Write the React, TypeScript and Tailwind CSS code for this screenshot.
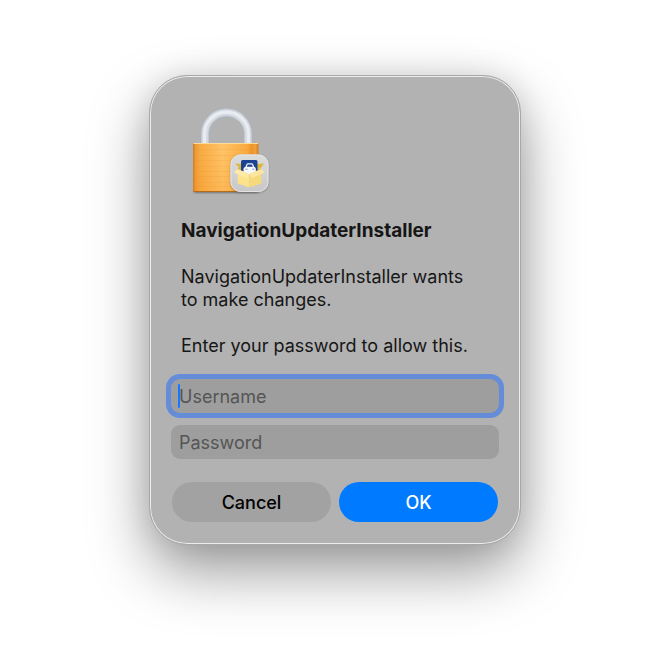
import { useState } from 'react';
import type { FormEvent } from 'react';

const APP_NAME = 'NavigationUpdaterInstaller';

type FieldName = 'username' | 'password';

interface CredentialFieldProps {
  name: FieldName;
  label: string;
  value: string;
  focused: boolean;
  onFocus: (name: FieldName) => void;
  onChange: (value: string) => void;
}

/** Padlock with the installer badge in its lower right corner. */
function LockIcon({ className }: { className?: string }) {
  return (
    <svg width="80" height="90" viewBox="0 0 80 90" role="img" aria-label="Locked" className={className}>
      <defs>
        <linearGradient id="lock-body" x1="0" x2="1" y1="0" y2="0">
          <stop offset="0" stopColor="#c97a22" />
          <stop offset="0.04" stopColor="#ee9c38" />
          <stop offset="0.12" stopColor="#f8ac45" />
          <stop offset="0.45" stopColor="#ffc468" />
          <stop offset="0.82" stopColor="#f9ab42" />
          <stop offset="0.9" stopColor="#ec942c" />
          <stop offset="0.95" stopColor="#f2a13c" />
          <stop offset="1" stopColor="#cf7c22" />
        </linearGradient>
        <linearGradient id="lock-shade" x1="0" x2="0" y1="0" y2="1">
          <stop offset="0" stopColor="#ff9d2b" stopOpacity="0" />
          <stop offset="1" stopColor="#f08a1c" stopOpacity="0.2" />
        </linearGradient>
        <linearGradient id="badge-face" x1="0" x2="0" y1="0" y2="1">
          <stop offset="0" stopColor="#dcdcdc" />
          <stop offset="1" stopColor="#c8c8c8" />
        </linearGradient>
        <filter id="soft" x="-20%" y="-20%" width="140%" height="140%">
          <feGaussianBlur stdDeviation="1" />
        </filter>
      </defs>

      {/* shackle */}
      <g fill="none">
        <path d="M15 39V29a21.500 21.500 0 0 1 43 0v10" stroke="#a9b0ba" strokeWidth="9" />
        <path d="M15 39V29a21.500 21.500 0 0 1 43 0v10" stroke="#c6cdd5" strokeWidth="7.8" />
        <path d="M15 39V29a21.500 21.500 0 0 1 43 0v10" stroke="#d8dde4" strokeWidth="5.6" />
        <path d="M14.500 39V29a22 22 0 0 1 44 0v10" stroke="#e9edf1" strokeWidth="2.800" />
      </g>

      {/* body */}
      <rect x="4" y="84" width="64" height="4" rx="1" fill="#4a4a4a" opacity="0.6" filter="url(#soft)" />
      <rect x="3" y="38" width="65.5" height="49" rx="1.2" fill="url(#lock-body)" />
      <rect x="3" y="38" width="65.5" height="49" rx="1.2" fill="url(#lock-shade)" />
      <path
        d="M4 44.5h64M4 50.5h64M4 55.5h64M4 61.5h64M4 66.5h64M4 71.5h64M4 77.5h64M4 81.5h64"
        stroke="#e98f2a"
        strokeOpacity="0.16"
      />
      <path d="M3.5 38.5h64.5" stroke="#ffdc96" />
      <path d="M3.5 86.5h64.5" stroke="#b56a1c" />

      {/* badge */}
      <rect x="40.500" y="50.5" width="38" height="37.5" rx="10" fill="#555" opacity="0.45" filter="url(#soft)" />
      <rect x="40.500" y="49.500" width="38" height="37.500" rx="10" fill="url(#badge-face)" />
      <rect x="41" y="50" width="37" height="36.500" rx="9.500" fill="none" stroke="#e4e4e4" />

      {/* open box with the car card */}
      <path d="M45 58.500l8 .5v6l-5.300-.5 1-2.500z" fill="#dfb63c" />
      <path d="M74 58.500l-7 .5v6l-4.500-.5 8-1z" fill="#dfb63c" />
      <path d="M47.700 64h23.600v5h-23.600z" fill="#d6a935" />
      <rect x="51" y="55" width="16.500" height="14" rx="1.500" fill="#1c4391" />
      <path
        d="M53.500 64.500c0-1.500.8-2.200 1.800-2.500l1-2.600c.3-.8.900-1.200 1.700-1.200h3.600c.8 0 1.400.4 1.700 1.200l1 2.600c1 .3 1.600 1 1.600 2.500v2.500l-6.200 2.500-6.200-2.500z"
        fill="#f4f7fc"
      />
      <path d="M57.600 59.600h4.400l.8 2.200h-6z" fill="#1c4391" />
      <path d="M55.500 64.200h2M62.300 64.200h2" stroke="#7d97c8" strokeWidth="1" />
      <path d="M47.700 66l11.600 3.500v13l-11.600-4z" fill="#fce28a" />
      <path d="M71.300 66l-12 3.500v13l12-4z" fill="#f6d97a" />
      <path d="M47.700 64l11.600 4.700-2.600 4.200-12.700-5.400z" fill="#feebaa" />
      <path d="M71.300 64l-12 4.700 2.700 4.200 12.700-5.400z" fill="#fde7a0" />
    </svg>
  );
}

function CredentialField({ name, label, value, focused, onFocus, onChange }: CredentialFieldProps) {
  const ring = focused ? 'ring-[5px] ring-[#648cd8]' : '';

  return (
    <div className="relative">
      <input
        type={name === 'password' ? 'password' : 'text'}
        name={name}
        aria-label={label}
        value={value}
        placeholder={label}
        autoComplete="off"
        onFocus={() => onFocus(name)}
        onChange={(event) => onChange(event.target.value)}
        className={`block h-[34px] w-full rounded-[9px] bg-[#9e9e9e] px-2 text-[18px] text-[#161616] outline-none placeholder:text-[#555555] placeholder:opacity-100 ${ring} ${value ? 'caret-[#0a7aff]' : 'caret-transparent'}`}
      />
      {/* thick caret while the field is empty */}
      {focused && !value && (
        <span className="pointer-events-none absolute top-[5px] left-[7px] h-6 w-[2px] rounded-full bg-[#1479ff]" />
      )}
    </div>
  );
}

export default function App() {
  const [focused, setFocused] = useState<FieldName>('username');
  const [username, setUsername] = useState('');
  const [password, setPassword] = useState('');

  const handleSubmit = (event: FormEvent) => {
    event.preventDefault();
    setPassword('');
  };

  return (
    <main className="flex min-h-screen items-start justify-center bg-white px-4 pt-[75px] pb-[120px] font-['Inter','Liberation_Sans',sans-serif] text-[18px] leading-[23px] text-[#161616]">
      <form
        role="dialog"
        aria-labelledby="dialog-title"
        onSubmit={handleSubmit}
        className="w-full max-w-[372px] rounded-[38px] border border-[#a8a8a8] bg-[#b2b2b2] px-[21px] pt-[29px] pb-[22px] shadow-[inset_0_0_0_1px_#ececec,0_26px_60px_rgba(0,0,0,0.4),0_0_30px_rgba(0,0,0,0.1)]"
      >
        <LockIcon className="ml-[19px]" />

        <div className="mt-6 pr-5 pl-[10px]">
          <h1 id="dialog-title" className="text-[19px] font-bold">{APP_NAME}</h1>
          <p className="mt-[23px]">{`${APP_NAME} wants to make changes.`}</p>
          <p className="mt-[23px]">Enter your password to allow this.</p>
        </div>

        <div className="mt-[22px] flex flex-col gap-3">
          <CredentialField
            name="username"
            label="Username"
            value={username}
            focused={focused === 'username'}
            onFocus={setFocused}
            onChange={setUsername}
          />
          <CredentialField
            name="password"
            label="Password"
            value={password}
            focused={focused === 'password'}
            onFocus={setFocused}
            onChange={setPassword}
          />
        </div>

        <div className="mt-[23px] grid grid-cols-2 gap-2 px-px font-medium">
          <button type="button" className="h-10 rounded-full bg-[#a2a2a2] text-black">
            Cancel
          </button>
          <button type="submit" className="h-10 rounded-full bg-[#007aff] text-white">
            OK
          </button>
        </div>
      </form>
    </main>
  );
}
